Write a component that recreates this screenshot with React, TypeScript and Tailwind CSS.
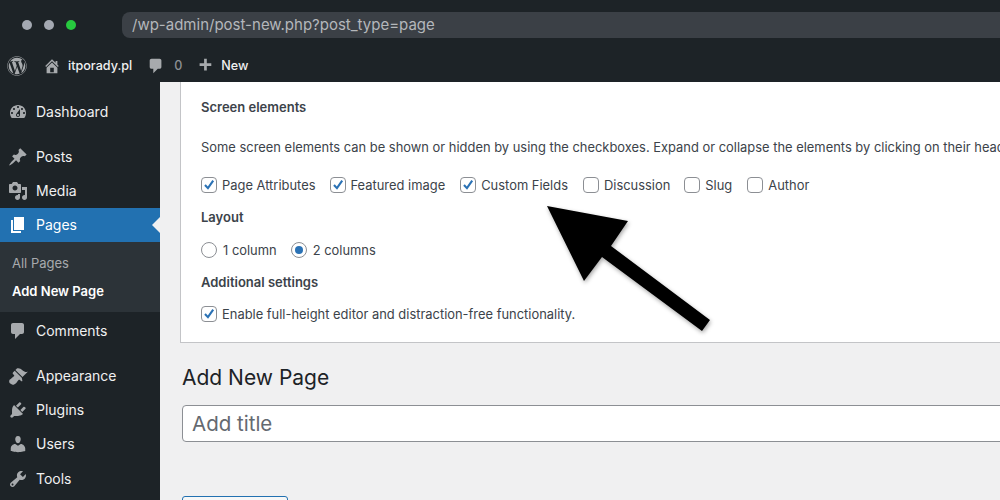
import React from "react";
import { FaWordpress } from "react-icons/fa";

const P = {
  dashboard: "M3.76 16h12.48c1.1-1.37 1.76-3.11 1.76-5 0-4.42-3.58-8-8-8s-8 3.58-8 8c0 1.89.66 3.63 1.76 5zM10 4c.55 0 1 .45 1 1s-.45 1-1 1-1-.45-1-1 .45-1 1-1zM6 6c.55 0 1 .45 1 1s-.45 1-1 1-1-.45-1-1 .45-1 1-1zm8 0c.55 0 1 .45 1 1s-.45 1-1 1-1-.45-1-1 .45-1 1-1zm-5.37 5.55L12 7v6c0 1.1-.9 2-2 2s-2-.9-2-2c0-.57.24-1.08.63-1.45zM4 10c.55 0 1 .45 1 1s-.45 1-1 1-1-.45-1-1 .45-1 1-1zm12 0c.55 0 1 .45 1 1s-.45 1-1 1-1-.45-1-1 .45-1 1-1zm-5 3c0-.55-.45-1-1-1s-1 .45-1 1 .45 1 1 1 1-.45 1-1z",
  post: "M10.44 3.02l1.82-1.82 6.36 6.35-1.83 1.82c-1.05-.68-2.48-.57-3.41.36l-.75.75c-.92.93-1.04 2.35-.35 3.41l-1.83 1.82-2.41-2.41-2.8 2.79c-.42.42-3.38 2.71-3.8 2.29s1.86-3.39 2.28-3.81l2.79-2.79L4.1 9.36l1.83-1.82c1.05.69 2.48.57 3.4-.36l.75-.75c.93-.92 1.05-2.35.36-3.41z",
  media: "M13 11V4c0-.55-.45-1-1-1h-1.67L9 1H5L3.67 3H2c-.55 0-1 .45-1 1v7c0 .55.45 1 1 1h10c.55 0 1-.45 1-1zM7 4.5c1.38 0 2.5 1.12 2.5 2.5S8.38 9.5 7 9.5 4.5 8.38 4.5 7 5.62 4.5 7 4.5zM14 6h5v10.5c0 1.38-1.12 2.5-2.5 2.5S14 17.88 14 16.5s1.12-2.5 2.5-2.5c.17 0 .34.02.5.05V9h-3V6zm-4 8.05V13h2v3.5c0 1.38-1.12 2.5-2.5 2.5S7 17.88 7 16.5 8.12 14 9.5 14c.17 0 .34.02.5.05z",
  page: "M6 15V2h10v13H6zm-1 1h8v2H3V5h2v11z",
  comments: "M5 2h9c1.1 0 2 .9 2 2v7c0 1.1-.9 2-2 2h-2l-5 5v-5H5c-1.1 0-2-.9-2-2V4c0-1.1.9-2 2-2z",
  appearance: "M14.48 11.06L7.41 3.99l1.5-1.5c.5-.56 2.3-.47 3.51.32 1.21.8 1.43 1.28 2.91 2.1 1.18.64 2.45 1.26 4.45.85zm-.71.71L6.7 4.7 4.93 6.47c-.39.39-.39 1.02 0 1.41l1.06 1.06c.39.39.39 1.03 0 1.42-.6.6-1.43 1.11-2.21 1.69-.35.26-.7.53-1.01.84C1.43 13.23.28 15.6 2.3 17.6c2.02 2.02 4.37.87 5.7-.45.31-.31.58-.66.84-1.01.58-.78 1.09-1.61 1.69-2.21.39-.39 1.03-.39 1.42 0l1.06 1.06c.39.39 1.02.39 1.41 0z",
  plugins: "M13.11 4.36L9.87 7.6 8 5.73l3.24-3.24c.35-.34 1.05-.2 1.56.32.52.51.66 1.21.31 1.55zm-8 1.77l.91-1.12 9.01 9.01-1.19.84c-.71.71-2.63 1.16-3.82 1.16H6.14L4.9 17.26c-.59.59-1.54.59-2.12 0-.59-.58-.59-1.53 0-2.12l1.24-1.24v-3.88c0-1.13.4-3.19 1.09-3.89zm7.26 3.97l3.24-3.24c.34-.35 1.04-.21 1.55.31.52.51.66 1.21.31 1.55l-3.24 3.25z",
  users: "M10 9.25c-2.27 0-2.73-3.44-2.73-3.44C7 4.02 7.82 2 9.97 2c2.16 0 2.98 2.02 2.71 3.81 0 0-.41 3.44-2.68 3.44zm0 2.57L12.72 10c2.39 0 4.52 2.33 4.52 4.53v2.49s-3.65 1.13-7.24 1.13c-3.65 0-7.24-1.13-7.24-1.13v-2.49c0-2.25 1.94-4.48 4.47-4.48z",
  tools: "M16.68 9.77c-1.34 1.34-3.3 1.67-4.95.99l-5.41 6.52c-.99.99-2.59.99-3.58 0s-.99-2.59 0-3.57l6.52-5.42c-.68-1.65-.35-3.61.99-4.95 1.28-1.28 3.12-1.62 4.72-1.06l-2.89 2.89 2.82 2.82 2.86-2.87c.53 1.58.18 3.39-1.08 4.65zM3.81 16.21c.4.39 1.04.39 1.43 0 .4-.4.4-1.04 0-1.43-.39-.4-1.03-.4-1.43 0-.39.39-.39 1.03 0 1.43z",
  home: "M16 8.5l1.53 1.53-1.06 1.06L10 4.62l-6.47 6.47-1.06-1.06L10 2.5l4 4v-2h2v4zm-6-2.46l6 5.99V18H4v-5.97zM12 17v-5H8v5h4z",
  plus: "M17 7v3h-5v5H9v-5H4V7h5V2h3v5h5z",
};

function Dash({ d, className }: { d: string; className: string }) {
  return (
    <svg viewBox="0 0 20 20" fill="currentColor" className={className}>
      <path d={d} />
    </svg>
  );
}

function MenuItem({ d, label, active }: { d: string; label: string; active?: boolean }) {
  return (
    <div className={`relative flex h-[34px] items-center ${active ? "bg-[#2271b1] text-white" : "text-[#f0f0f1]"}`}>
      <div className={`flex w-[36px] shrink-0 justify-center pr-[1px] ${active ? "text-white" : "text-[#a7aaad]"}`}>
        <Dash d={d} className="h-5 w-5" />
      </div>
      <span className="text-[14px] leading-5">{label}</span>
      {active && (
        <div className="absolute right-0 top-[9px] h-0 w-0 border-y-[8px] border-r-[8px] border-y-transparent border-r-[#f0f0f1]" />
      )}
    </div>
  );
}

function Check({ checked }: { checked?: boolean }) {
  return (
    <div className="flex h-4 w-4 shrink-0 items-center justify-center rounded-[4px] border border-[#8c8f94] bg-white">
      {checked && (
        <svg viewBox="0 0 16 16" className="h-[16px] w-[16px]" fill="none" stroke="#2b72b5" strokeWidth="2.4">
          <path d="M3.4 8 L6.8 11.6 L12.8 3" />
        </svg>
      )}
    </div>
  );
}

function CheckLabel({ label, checked, className }: { label: string; checked?: boolean; className?: string }) {
  return (
    <div className={`flex items-center gap-[5px] ${className ?? ""}`}>
      <Check checked={checked} />
      <span>{label}</span>
    </div>
  );
}

function Radio({ label, checked }: { label: string; checked?: boolean }) {
  return (
    <div className="flex items-center gap-[6px]">
      <div className="flex h-4 w-4 items-center justify-center rounded-full border border-[#8c8f94] bg-white">
        {checked && <div className="h-2 w-2 rounded-full bg-[#2b72b5]" />}
      </div>
      <span>{label}</span>
    </div>
  );
}

export default function App() {
  return (
    <div className="relative flex h-[500px] w-[1000px] flex-col overflow-hidden bg-[#f0f0f1] font-['Inter','Liberation_Sans',sans-serif] text-[12.92px] text-[#3c434a]">
      <header className="h-[82px] shrink-0 bg-[#1d2327]">
        <div className="flex h-[50px] items-end pb-0">
          <div className="flex h-[38px] w-full items-center pb-[13px]">
            <div className="ml-[22px] flex gap-[12px]">
              <span className="h-[10px] w-[10px] rounded-full bg-[#a4a9b2]" />
              <span className="h-[10px] w-[10px] rounded-full bg-[#a4a9b2]" />
              <span className="h-[10px] w-[10px] rounded-full bg-[#27c93f]" />
            </div>
          </div>
        </div>
      </header>
      <div className="absolute left-[122px] top-[12px] flex h-[26px] w-[900px] items-center rounded-[8px] bg-[#3b4046] pl-[10px] text-[15px] text-[#b4b7bb]">
        /wp-admin/post-new.php?post_type=page
      </div>
      <div className="absolute left-0 top-[50px] flex h-[32px] items-center text-[12.6px] font-medium text-[#f0f0f1]">
        <FaWordpress className="ml-[7px] h-5 w-5 text-[#a7aaad]" />
        <Dash d={P.home} className="ml-[16px] h-[18px] w-[18px] text-[#a7aaad]" />
        <span className="ml-[7px]">itporady.pl</span>
        <Dash d={P.comments} className="ml-[15px] h-[18px] w-[18px] text-[#a7aaad]" />
        <span className="ml-[9px] text-[#8c8f94]">0</span>
        <Dash d={P.plus} className="ml-[14px] h-[18px] w-[18px] text-[#a7aaad]" />
        <span className="ml-[7px]">New</span>
      </div>

      <div className="flex min-h-0 flex-1">
        <aside className="flex w-[160px] shrink-0 flex-col bg-[#1d2327] pt-[13px]">
          <MenuItem d={P.dashboard} label="Dashboard" />
          <div className="mt-[11px]">
            <MenuItem d={P.post} label="Posts" />
            <MenuItem d={P.media} label="Media" />
            <MenuItem d={P.page} label="Pages" active />
          </div>
          <div className="flex h-[70px] flex-col bg-[#2c3338] pl-[12px] pt-[11px] text-[13px]">
            <div className="leading-5 text-[#a7aaad]">All Pages</div>
            <div className="mt-[8px] font-semibold leading-5 text-white">Add New Page</div>
          </div>
          <div className="mt-[2px]">
            <MenuItem d={P.comments} label="Comments" />
          </div>
          <div className="mt-[11px]">
            <MenuItem d={P.appearance} label="Appearance" />
            <MenuItem d={P.plugins} label="Plugins" />
            <MenuItem d={P.users} label="Users" />
            <div className="mt-[1px]">
              <MenuItem d={P.tools} label="Tools" />
            </div>
          </div>
        </aside>

        <main className="min-w-0 flex-1 overflow-hidden pl-[20px]">
          <section className="w-[900px] whitespace-nowrap border-b border-l border-[#c3c4c7] bg-white pb-[18px] pl-[20px] pt-[15px] leading-5">
            <div className="text-[13px] font-semibold">Screen elements</div>
            <div className="mt-[20px]">
              Some screen elements can be shown or hidden by using the checkboxes. Expand or collapse the elements by clicking on their headings
            </div>
            <div className="mt-[18px] flex">
              <CheckLabel label="Page Attributes" checked className="mr-[14px]" />
              <CheckLabel label="Featured image" checked className="mr-[15px]" />
              <CheckLabel label="Custom Fields" checked className="mr-[15px]" />
              <CheckLabel label="Discussion" className="mr-[14px]" />
              <CheckLabel label="Slug" className="mr-[15px]" />
              <CheckLabel label="Author" />
            </div>
            <div className="mt-[12px] text-[13px] font-semibold">Layout</div>
            <div className="mt-[13px] flex gap-[14px]">
              <Radio label="1 column" />
              <Radio label="2 columns" checked />
            </div>
            <div className="mt-[12px] text-[13px] font-semibold">Additional settings</div>
            <div className="mt-[12px]">
              <CheckLabel label="Enable full-height editor and distraction-free functionality." checked />
            </div>
          </section>

          <div className="ml-[2px] mt-[20px]">
            <h1 className="text-[21px] leading-[30px] text-[#1d2327]">Add New Page</h1>
            <div className="mt-[12px] flex h-[37px] w-[900px] items-center rounded-[4px] border border-[#8c8f94] bg-white pl-[9px] pt-[2px] text-[20.5px] text-[#646970]">
              Add title
            </div>
            <div className="mt-[54px] h-[30px] w-[106px] rounded-[3px] border border-[#2271b1] bg-[#f6f7f7]" />
          </div>
        </main>
      </div>

      <svg viewBox="0 0 1000 500" className="pointer-events-none absolute left-0 top-0 h-[500px] w-[1000px]">
        <path d="M547 206 L628 221 L611 246 L710 320 L702 331 L602 257 L584 281 Z" fill="#000" style={{ filter: "drop-shadow(1px 2px 2px rgba(0,0,0,0.35))" }} />
      </svg>
    </div>
  );
}
